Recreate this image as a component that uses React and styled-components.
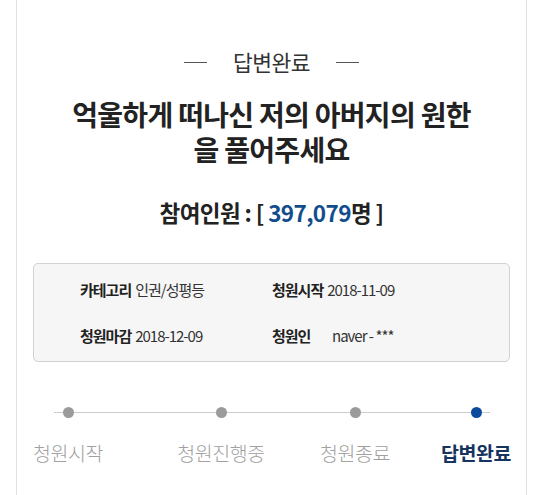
import React from 'react';
import styled, { createGlobalStyle } from 'styled-components';

const GlobalStyle = createGlobalStyle`
  html, body {
    margin: 0;
    padding: 0;
    background: #fff;
  }
  body {
    font-family: "Noto Sans CJK KR", "Noto Sans", sans-serif;
    color: #222;
  }
`;

// Outer card with side borders only (top/bottom run off screen)
const Card = styled.div`
  margin: 0 13px 0 16px;
  border-left: 1px solid #e2e2e2;
  border-right: 1px solid #e2e2e2;
  padding: 49px 16px 31px;
  min-height: 495px;
  box-sizing: border-box;
`;

const StatusHead = styled.div`
  display: flex;
  align-items: center;
  justify-content: center;
  gap: 26px;
  font-size: 21.5px;
  line-height: 26px;
  color: #333;
  letter-spacing: -0.5px;

  &::before,
  &::after {
    content: '';
    width: 23px;
    height: 1px;
    background: #555;
  }
`;

const Title = styled.h1`
  margin: 22px 0 0;
  display: flex;
  flex-direction: column;
  align-items: center;
  font-size: 28px;
  font-weight: 700;
  color: #222;
  letter-spacing: -0.7px;
`;

const TitleLine = styled.span`
  line-height: 35px;
  height: 35px;
  overflow: visible;
`;

const Count = styled.div`
  margin-top: 31px;
  text-align: center;
  font-size: 22.5px;
  line-height: 28px;
  font-weight: 700;
  color: #222;
  letter-spacing: -0.6px;
`;

const Num = styled.span`
  color: #114d8c;
`;

const InfoBox = styled.div`
  margin-top: 37px;
  border: 1px solid #d2d2d2;
  border-radius: 5px;
  background: #f6f6f6;
  padding: 16px 0 15px 46px;
  display: grid;
  grid-template-columns: 192px 1fr;
  row-gap: 26px;
`;

const InfoItem = styled.div`
  display: flex;
  align-items: center;
  font-size: 15px;
  line-height: 20px;
  color: #333;
  letter-spacing: -1px;
  white-space: nowrap;
`;

const InfoLabel = styled.b`
  font-weight: 700;
  color: #222;
  min-width: ${(p) => (p.$wide ? '56px' : 'auto')};
  margin-right: 4px;
`;

const Steps = styled.div`
  position: relative;
  display: flex;
  margin: 45px -16px 0;
  padding-left: 6px;

  &::before {
    content: '';
    position: absolute;
    left: 37px;
    right: 36px;
    top: 5px;
    height: 1px;
    background: #cccccc;
  }
`;

const Step = styled.div`
  position: relative;
  width: 90px;
  margin-left: ${(p) => p.$gap}px;
  display: flex;
  flex-direction: column;
  align-items: center;
  gap: 23px;
`;

const Dot = styled.span`
  width: 11px;
  height: 11px;
  border-radius: 50%;
  background: ${(p) => (p.$active ? '#0b4a9c' : '#9b9b9b')};
  z-index: 1;
`;

const StepLabel = styled.span`
  font-size: 19.5px;
  line-height: 24px;
  white-space: nowrap;
  letter-spacing: -0.4px;
  color: ${(p) => (p.$active ? '#17345f' : '#a0a0a0')};
  font-weight: ${(p) => (p.$active ? 700 : 300)};
`;

const steps = [
  { label: '청원시작', gap: 0 },
  { label: '청원진행중', gap: 63 },
  { label: '청원종료', gap: 44 },
  { label: '답변완료', gap: 31, active: true },
];

export default function App() {
  return (
    <>
      <GlobalStyle />
      <Card>
        <StatusHead>답변완료</StatusHead>
        <Title>
          <TitleLine>억울하게 떠나신 저의 아버지의 원한</TitleLine>
          <TitleLine>을 풀어주세요</TitleLine>
        </Title>
        <Count>
          참여인원 : [ <Num>397,079</Num>명 ]
        </Count>

        <InfoBox>
          <InfoItem>
            <InfoLabel>카테고리</InfoLabel>인권/성평등
          </InfoItem>
          <InfoItem>
            <InfoLabel>청원시작</InfoLabel>2018-11-09
          </InfoItem>
          <InfoItem>
            <InfoLabel>청원마감</InfoLabel>2018-12-09
          </InfoItem>
          <InfoItem>
            <InfoLabel $wide>청원인</InfoLabel>naver - ***
          </InfoItem>
        </InfoBox>

        <Steps>
          {steps.map((s) => (
            <Step key={s.label} $gap={s.gap}>
              <Dot $active={s.active} />
              <StepLabel $active={s.active}>{s.label}</StepLabel>
            </Step>
          ))}
        </Steps>
      </Card>
    </>
  );
}
